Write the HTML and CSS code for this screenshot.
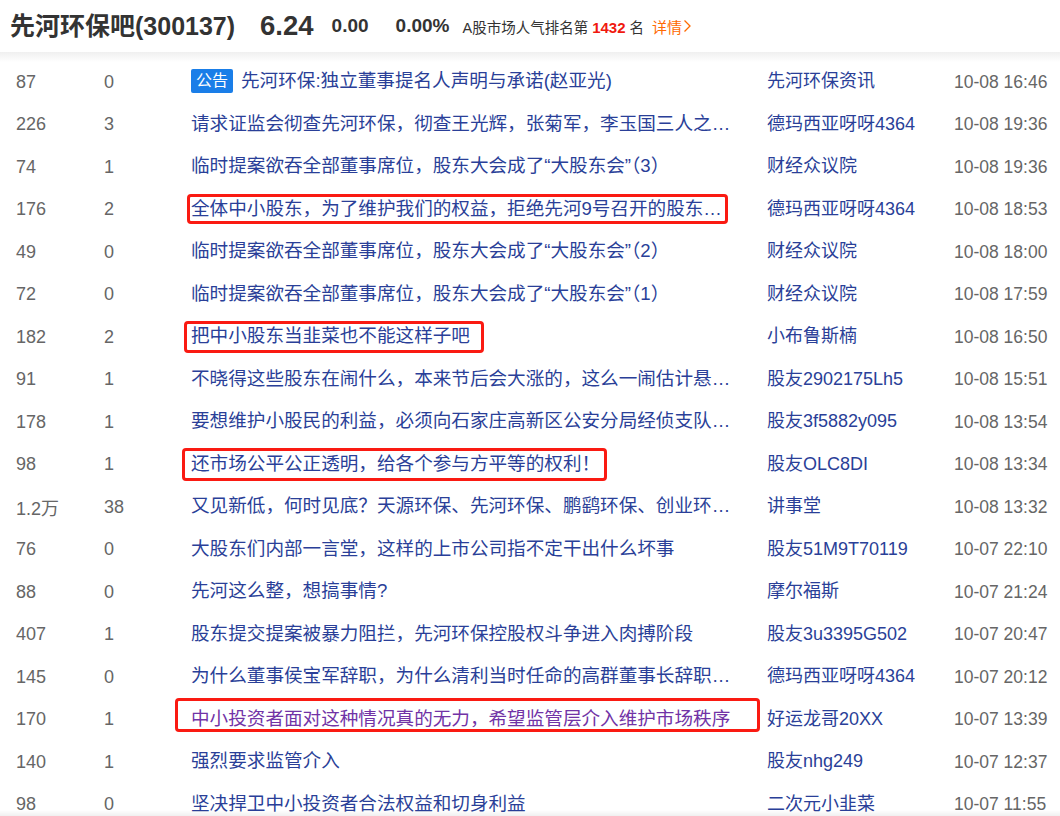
FILE: index.html
```html
<!DOCTYPE html>
<html>
<head>
	<meta charset="UTF-8">
	<title>先河环保吧(300137)</title>
	<meta name="viewport" content="width=device-width, initial-scale=1">
	<link rel="stylesheet" href="styles.css">
</head>
<body>

	<div class="bar-head">
		<h1 class="bar-name">先河环保吧(300137)</h1>
		<span class="quote-price">6.24</span>
		<span class="quote-chg">0.00</span>
		<span class="quote-pct">0.00%</span>
		<span class="rank">A股市场人气排名第 <b>1432</b> 名</span>
		<a class="rank-more" href="#">详情<svg width="9" height="14" viewBox="0 0 9 14"><path d="M1.5 1.5 L7 7 L1.5 12.5" fill="none" stroke="#ff6a00" stroke-width="1.3"/></svg></a>
	</div>

	<ul class="post-list">
		<li class="post">
			<span class="c-read">87</span>
			<span class="c-reply">0</span>
			<span class="c-title"><em class="tag">公告</em><a href="#">先河环保:独立董事提名人声明与承诺(赵亚光)</a></span>
			<span class="c-author"><a href="#">先河环保资讯</a></span>
			<span class="c-time">10-08 16:46</span>
		</li>
		<li class="post">
			<span class="c-read">226</span>
			<span class="c-reply">3</span>
			<span class="c-title"><a href="#">请求证监会彻查先河环保，彻查王光辉，张菊军，李玉国三人之…</a></span>
			<span class="c-author"><a href="#">德玛西亚呀呀4364</a></span>
			<span class="c-time">10-08 19:36</span>
		</li>
		<li class="post">
			<span class="c-read">74</span>
			<span class="c-reply">1</span>
			<span class="c-title"><a href="#">临时提案欲吞全部董事席位，股东大会成了“大股东会”（3）</a></span>
			<span class="c-author"><a href="#">财经众议院</a></span>
			<span class="c-time">10-08 19:36</span>
		</li>
		<li class="post">
			<span class="c-read">176</span>
			<span class="c-reply">2</span>
			<span class="c-title"><i class="mark mark-a"></i><a href="#">全体中小股东，为了维护我们的权益，拒绝先河9号召开的股东…</a></span>
			<span class="c-author"><a href="#">德玛西亚呀呀4364</a></span>
			<span class="c-time">10-08 18:53</span>
		</li>
		<li class="post">
			<span class="c-read">49</span>
			<span class="c-reply">0</span>
			<span class="c-title"><a href="#">临时提案欲吞全部董事席位，股东大会成了“大股东会”（2）</a></span>
			<span class="c-author"><a href="#">财经众议院</a></span>
			<span class="c-time">10-08 18:00</span>
		</li>
		<li class="post">
			<span class="c-read">72</span>
			<span class="c-reply">0</span>
			<span class="c-title"><a href="#">临时提案欲吞全部董事席位，股东大会成了“大股东会”（1）</a></span>
			<span class="c-author"><a href="#">财经众议院</a></span>
			<span class="c-time">10-08 17:59</span>
		</li>
		<li class="post">
			<span class="c-read">182</span>
			<span class="c-reply">2</span>
			<span class="c-title"><i class="mark mark-b"></i><a href="#">把中小股东当韭菜也不能这样子吧</a></span>
			<span class="c-author"><a href="#">小布鲁斯楠</a></span>
			<span class="c-time">10-08 16:50</span>
		</li>
		<li class="post">
			<span class="c-read">91</span>
			<span class="c-reply">1</span>
			<span class="c-title"><a href="#">不晓得这些股东在闹什么，本来节后会大涨的，这么一闹估计悬…</a></span>
			<span class="c-author"><a href="#">股友2902175Lh5</a></span>
			<span class="c-time">10-08 15:51</span>
		</li>
		<li class="post">
			<span class="c-read">178</span>
			<span class="c-reply">1</span>
			<span class="c-title"><a href="#">要想维护小股民的利益，必须向石家庄高新区公安分局经侦支队…</a></span>
			<span class="c-author"><a href="#">股友3f5882y095</a></span>
			<span class="c-time">10-08 13:54</span>
		</li>
		<li class="post">
			<span class="c-read">98</span>
			<span class="c-reply">1</span>
			<span class="c-title"><i class="mark mark-c"></i><a href="#">还市场公平公正透明，给各个参与方平等的权利！</a></span>
			<span class="c-author"><a href="#">股友OLC8DI</a></span>
			<span class="c-time">10-08 13:34</span>
		</li>
		<li class="post">
			<span class="c-read">1.2万</span>
			<span class="c-reply">38</span>
			<span class="c-title"><a href="#">又见新低，何时见底？天源环保、先河环保、鹏鹞环保、创业环…</a></span>
			<span class="c-author"><a href="#">讲事堂</a></span>
			<span class="c-time">10-08 13:32</span>
		</li>
		<li class="post">
			<span class="c-read">76</span>
			<span class="c-reply">0</span>
			<span class="c-title"><a href="#">大股东们内部一言堂，这样的上市公司指不定干出什么坏事</a></span>
			<span class="c-author"><a href="#">股友51M9T70119</a></span>
			<span class="c-time">10-07 22:10</span>
		</li>
		<li class="post">
			<span class="c-read">88</span>
			<span class="c-reply">0</span>
			<span class="c-title"><a href="#">先河这么整，想搞事情?</a></span>
			<span class="c-author"><a href="#">摩尔福斯</a></span>
			<span class="c-time">10-07 21:24</span>
		</li>
		<li class="post">
			<span class="c-read">407</span>
			<span class="c-reply">1</span>
			<span class="c-title"><a href="#">股东提交提案被暴力阻拦，先河环保控股权斗争进入肉搏阶段</a></span>
			<span class="c-author"><a href="#">股友3u3395G502</a></span>
			<span class="c-time">10-07 20:47</span>
		</li>
		<li class="post">
			<span class="c-read">145</span>
			<span class="c-reply">0</span>
			<span class="c-title"><a href="#">为什么董事侯宝军辞职，为什么清利当时任命的高群董事长辞职…</a></span>
			<span class="c-author"><a href="#">德玛西亚呀呀4364</a></span>
			<span class="c-time">10-07 20:12</span>
		</li>
		<li class="post">
			<span class="c-read">170</span>
			<span class="c-reply">1</span>
			<span class="c-title"><i class="mark mark-d"></i><a href="#" class="visited">中小投资者面对这种情况真的无力，希望监管层介入维护市场秩序</a></span>
			<span class="c-author"><a href="#">好运龙哥20XX</a></span>
			<span class="c-time">10-07 13:39</span>
		</li>
		<li class="post">
			<span class="c-read">140</span>
			<span class="c-reply">1</span>
			<span class="c-title"><a href="#">强烈要求监管介入</a></span>
			<span class="c-author"><a href="#">股友nhg249</a></span>
			<span class="c-time">10-07 12:37</span>
		</li>
		<li class="post">
			<span class="c-read">98</span>
			<span class="c-reply">0</span>
			<span class="c-title"><a href="#">坚决捍卫中小投资者合法权益和切身利益</a></span>
			<span class="c-author"><a href="#">二次元小韭菜</a></span>
			<span class="c-time">10-07 11:55</span>
		</li>
	</ul>

	<div class="page-fade"></div>

</body>
</html>
```

FILE: styles.css
```css
html {
	font-family: "Liberation Sans", "Noto Sans CJK SC", sans-serif;
	color: #333;
	background: #fff;
}

body {
	margin: 0;
	overflow: hidden;
}

a {
	color: #2a3f98;
	text-decoration: none;
}

/* head bar */

.bar-head {
	display: flex;
	align-items: center;
	height: 52px;
	padding-left: 10px;
	white-space: nowrap;
}

.bar-name {
	margin: 0 25px 0 0;
	font-size: 25px;
	line-height: 1;
	color: #333;
}

.quote-price {
	font-size: 27.5px;
	font-weight: bold;
	margin-right: 18px;
}

.quote-chg,
.quote-pct {
	font-size: 19px;
	font-weight: bold;
	color: #333;
}

.quote-chg {
	margin-right: 27px;
}

.quote-pct {
	margin-right: 13px;
}

.rank {
	font-size: 14.5px;
	color: #333;
	margin-right: 8px;
}

.rank b {
	font-size: 15px;
	color: #f0190f;
}

.rank-more {
	display: flex;
	align-items: center;
	gap: 1px;
	font-size: 15px;
	color: #ff6a00;
}

/* list */

.post-list {
	list-style: none;
	margin: 0;
	padding: 9px 0 0;
	background: linear-gradient(#f0f0f0, #fff 10px) no-repeat;
}

.post {
	display: grid;
	grid-template-columns: 88px 87px 576px 187px 1fr;
	align-items: center;
	height: 42.5px;
	padding-left: 16px;
	font-size: 18px;
	white-space: nowrap;
}

.c-read,
.c-reply,
.c-time {
	color: #666;
}

.c-time {
	font-size: 17.5px;
}

.c-title {
	position: relative;
	align-self: stretch;
	display: flex;
	align-items: center;
	font-size: 18.6px;
	line-height: 1.2;
	margin-top: -2px;
}

.c-author {
	font-size: 18px;
	line-height: 1.2;
}

.tag {
	font-style: normal;
	display: inline-block;
	background: #1a7ee8;
	color: #fff;
	font-size: 16px;
	line-height: 24px;
	padding: 0 5px;
	border-radius: 2px;
	margin-right: 8px;
}

.visited {
	color: #7133a6;
}

/* red hand marks drawn over the list */

.mark {
	position: absolute;
	box-sizing: border-box;
	border: 3px solid #fa1a12;
	border-radius: 4px;
}

.mark-a { left: -4px; top: 7.5px; width: 541px; height: 30px; }
.mark-b { left: -7px; top: 7px; width: 300px; height: 32px; }
.mark-c { left: -9px; top: 6.5px; width: 425px; height: 33px; }
.mark-d { left: -16px; top: 1.5px; width: 585px; height: 34px; }

.page-fade {
	position: fixed;
	left: 0;
	right: 0;
	bottom: 0;
	height: 6px;
	background: linear-gradient(rgba(0,0,0,0), rgba(0,0,0,.06));
}
```
